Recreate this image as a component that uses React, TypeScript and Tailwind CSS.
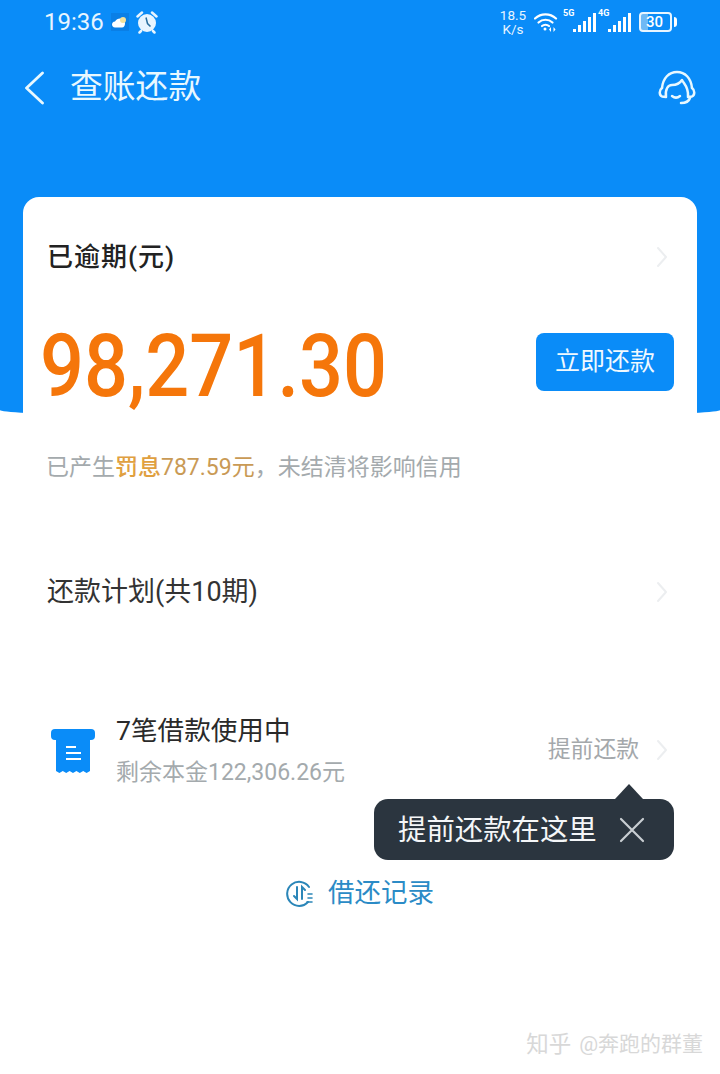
export default function App() {
  const font = "font-['Roboto','Noto_Sans_CJK_SC',sans-serif]";
  return (
    <div className={`relative h-[1074px] w-[720px] overflow-hidden bg-white ${font}`}>
      <div className="absolute left-0 top-0 h-[418px] w-[720px] rounded-b-[360px_8px] bg-[#0a8cf8]" />
      <div className="relative flex h-[44px] items-center justify-between pl-[44px] pr-[44px] text-white">
        <div className="flex items-center">
          <span className="text-[24px] leading-none text-[#e8f5ff]">19:36</span>
          <svg className="ml-[7px]" width="18" height="18" viewBox="0 0 18 18">
            <rect width="18" height="18" fill="#0a7fe6" />
            <path d="M4 14.500c-2 0-3-1.500-3-3s1-3 3-3c1-2 3-3 5-3 3 0 5 2 5 5 0 2-1 4-3 4z" fill="#fff" />
            <circle cx="12" cy="7" r="3" fill="#f5e29c" />
          </svg>
          <svg className="ml-[7px]" width="22" height="24" viewBox="0 0 22 24">
            <circle cx="11" cy="13" r="9" fill="#e8f5ff" />
            <path d="M10 7.500l1.500 6 3 3" fill="none" stroke="#2a6f9f" strokeWidth="1.500" />
            <path d="M1.500 6.500 6 2.500M20.500 6.500 16 2.500M5 21l-1.500 1.500M17 21l1.500 1.500" stroke="#e8f5ff" strokeWidth="2.500" strokeLinecap="round" />
          </svg>
        </div>
        <div className="mr-[-1px] flex items-center">
          <div className="flex w-[28px] flex-col items-center text-[13.500px] leading-[14px] text-[#e8f5ff]">
            <span>18.5</span>
            <span>K/s</span>
          </div>
          <svg className="ml-[7px]" width="24" height="20" viewBox="0 0 24 20" fill="none" stroke="#fff" strokeLinecap="round">
            <path d="M1 6.500C7 1 16 1 22 6.500" strokeWidth="2.200" />
            <path d="M4.500 10.500C8.500 6.800 14.500 6.800 18.500 10.500" strokeWidth="2.200" />
            <path d="M8 14c2-1.700 5-1.700 7 0" strokeWidth="2.200" />
            <circle cx="11" cy="17" r="1.500" fill="#fff" stroke="none" />
            <path d="M17 15l-2 2.500 2 2.500zM19.500 15l2 2.500-2 2.500z" fill="#fff" stroke="none" />
          </svg>
          <div className="relative ml-[5px] flex h-[20px] w-[33px] items-end justify-end gap-[2px]">
            <span className="absolute left-0 top-[-3px] text-[9px] font-bold leading-none">5G</span>
            <i className="h-[3px] w-[3px] bg-white" />
            <i className="h-[7px] w-[3px] bg-white" />
            <i className="h-[11px] w-[3px] bg-white" />
            <i className="h-[15px] w-[3px] bg-white" />
            <i className="h-[19px] w-[3px] bg-white" />
          </div>
          <div className="relative ml-[2px] flex h-[20px] w-[33px] items-end justify-end gap-[2px]">
            <span className="absolute left-0 top-[-3px] text-[9px] font-bold leading-none">4G</span>
            <i className="h-[3px] w-[3px] bg-white" />
            <i className="h-[7px] w-[3px] bg-white" />
            <i className="h-[11px] w-[3px] bg-white" />
            <i className="h-[15px] w-[3px] bg-white" />
            <i className="h-[19px] w-[3px] bg-white" />
          </div>
          <div className="ml-[8px] flex h-[20px] w-[33px] items-center rounded-[4px] border-2 border-[#e8f5ff] bg-[linear-gradient(90deg,#6fb9f5_0,#6fb9f5_7px,transparent_7px)] pl-[5px] text-[15px] font-medium leading-none">
            30
          </div>
          <div className="ml-[2px] h-[10px] w-[3px] rounded-r-sm bg-white" />
        </div>
      </div>

      <div className="relative flex h-[84px] items-center justify-between pl-[24px] pr-[24px] pt-[3px] text-[#e8f8ff]">
        <div className="flex items-center">
          <svg width="20" height="34" viewBox="0 0 20 34" fill="none" stroke="#e8f8ff" strokeWidth="2.800" strokeLinecap="round" strokeLinejoin="round">
            <path d="M18.500 2 2.500 17l16 15" />
          </svg>
          <span className="ml-[26px] text-[32.800px] leading-none">查账还款</span>
        </div>
        <svg width="38" height="36" viewBox="0 0 38 36" fill="none" stroke="#e8f8ff" strokeWidth="2.500" strokeLinecap="round" strokeLinejoin="round">
          <path d="M4 18C5 8 11 2 19 2s14 6 15 16" />
          <path d="M4 18C1 20 1 25 4 26.500L8 27C7 19 10 15 14 15c4 0 8-2 10-5 2 4 7 7 6 17l4-.5c3-1.500 3-6.500 0-8.500" />
          <path d="M14 26c2.500 2 5.500 2 8 0" />
          <path d="M32 28c-1 3-4 5-9 5" />
        </svg>
      </div>

      <div className="relative mx-[23px] mt-[69px] rounded-t-[16px] bg-white pl-[25px] pr-[23px]">
        <div className="flex h-[120px] items-center justify-between pr-[6px]">
          <span className="ml-[-1px] text-[26px] font-medium leading-none tracking-[1px] text-[#222]">已逾期(元)</span>
          <Chevron />
        </div>
        <div className="mt-[5px] flex items-center justify-between">
          <span className="ml-[-8px] mt-[-3px] origin-left scale-x-[0.88] text-[88px] font-medium leading-[94px] text-[#f5760a]">
            98,271.30
          </span>
          <button className="mt-[-12px] flex h-[58px] w-[138px] items-center justify-center rounded-[8px] bg-[#0a8cf8] text-[25px] leading-none text-[#f0f9ff]">
            立即还款
          </button>
        </div>
        <p className="ml-[-2px] mt-[40px] text-[23px] leading-[30px] text-[#a4aaad]">
          已产生<span className="font-medium text-[#e0a040]">罚息</span>
          <span className="text-[#c99a55]">787.59元</span>，未结清将影响信用
        </p>
        <div className="mt-[89px] flex h-[40px] items-center justify-between pr-[6px]">
          <span className="ml-[-1px] text-[27px] leading-none text-[#333]">还款计划(共10期)</span>
          <Chevron />
        </div>
        <div className="mt-[101px] flex items-center justify-between pr-[6px]">
          <div className="flex items-center">
            <svg className="ml-[3px]" width="44" height="44" viewBox="0 0 44 44">
              <rect x="5" y="4" width="34" height="36" fill="#0a8cf8" />
              <path d="M5 38h34v4l-3.400 2-3.400-2-3.400 2-3.400-2-3.400 2-3.400-2-3.400 2-3.400-2-3.400 2L5 42z" fill="#0a8cf8" />
              <rect x="0" y="0" width="44" height="11" rx="4" fill="#0a8cf8" />
              <path d="M15 18h10M15 24h15M15 30h15" stroke="#fff" strokeWidth="2" />
            </svg>
            <div className="ml-[21px] flex flex-col">
              <span className="text-[26.600px] leading-[36px] text-[#2a2a2a]">7笔借款使用中</span>
              <span className="mt-[9px] text-[23px] leading-[30px] text-[#a4aaad]">剩余本金122,306.26元</span>
            </div>
          </div>
          <div className="flex items-center gap-[17px]">
            <span className="text-[22.800px] leading-none text-[#a4a8ab]">提前还款</span>
            <Chevron />
          </div>
        </div>
        <div className="mt-[87px] flex items-center justify-center pr-[2px] text-[#2b8bc6]">
          <svg width="28" height="28" viewBox="0 0 28 28" fill="none" stroke="#2b86b8" strokeWidth="2" strokeLinecap="round">
            <path d="M23 8A12 12 0 1 0 22 23" />
            <path d="M11 8v12l-3-3M16 20V8l3 3" />
            <path d="M22 15h4M22 19h4M21 23h5" strokeWidth="1.600" />
          </svg>
          <span className="ml-[14px] text-[26.500px] leading-[36px]">借还记录</span>
        </div>
      </div>

      <div className="absolute left-[374px] top-[799px] flex h-[61px] w-[300px] items-center rounded-[14px] bg-[#2b353f] pl-[24px] text-[#f4f6f8]">
        <div className="absolute left-[241px] top-[-15px] h-0 w-0 border-x-[14px] border-b-[15px] border-x-transparent border-b-[#2b353f]" />
        <span className="pt-[3px] text-[28.400px] leading-none">提前还款在这里</span>
        <svg className="ml-[22px]" width="26" height="26" viewBox="0 0 26 26" stroke="#c9ced2" strokeWidth="2.200" strokeLinecap="round">
          <path d="M2 2l22 22M24 2 2 24" />
        </svg>
      </div>

      <div className="absolute right-[17px] top-[1031px] flex items-center leading-[26px] text-[#d8d8d8]">
        <span className="text-[22.500px]">知乎</span>
        <span className="ml-[8px] text-[21px]">@奔跑的群董</span>
      </div>
    </div>
  );
}

function Chevron() {
  return (
    <svg width="12" height="22" viewBox="0 0 12 22" fill="none" stroke="#eceef0" strokeWidth="2" strokeLinecap="round" strokeLinejoin="round">
      <path d="M2 2l8 9-8 9" />
    </svg>
  );
}
